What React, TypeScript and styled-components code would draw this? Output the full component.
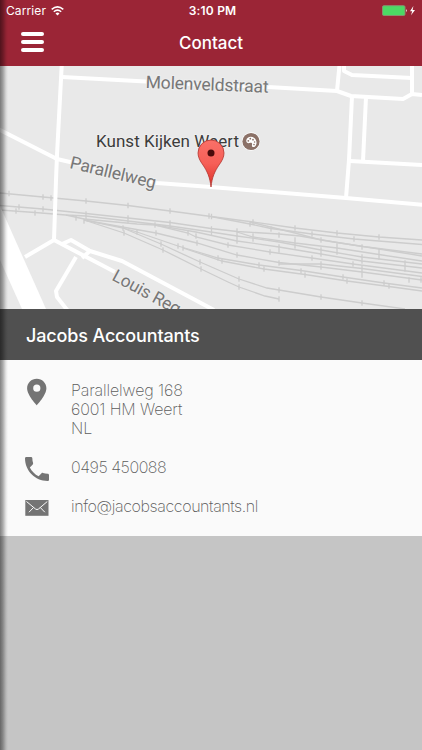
import React from "react"
import styled, { createGlobalStyle } from "styled-components"

const rails = [
  "M0 193 L43 197 L86 201 L128 205.5 L170 211 L211 216.5 L253 222 L295 228 L337 233 L379 237 L422 240",
  "M211 216.5 L250 224 L271 228.5 L312 234 L354 239 L422 244.5",
  "M250 222 L295 233 L321 240 L363 246.5 L422 254",
  "M0 205.5 L43 209 L86 213.5 L128 218 L170 222.5 L211 228.5 L237 231.5 L279 234 L300 236 L337 242.5 L379 249 L422 256",
  "M0 210 L35 212.5 L66 215 L86 216 L128 221 L170 226 L211 232 L237 236 L279 242 L321 250 L362 257 L422 264",
  "M237 232 L253 237 L295 243 L337 248 L379 254.5 L422 261",
  "M155 225 L196 232 L237 241 L279 247 L321 254 L362 261 L422 268",
  "M66 215 L84 219 L137 224 L155 225 L188 233 L196 237 L228 245 L270 252 L312 258 L353 264 L422 273",
  "M84 220 L128 228 L156 233 L197 243 L237 255 L279 262.5 L321 267 L362 272 L422 280",
  "M279 264 L321 264 L362 268.5 L422 276.5",
  "M123 228 L137 232 L178 246 L218 258 L259 265 L301 270.5 L343 277 L384 283 L422 288",
  "M183 248 L222 261 L264 269 L305 274.5 L347 281 L389 286.5 L422 291",
  "M84 220 L123 228 L161 244 L200 262 L239 279 L267 288 L279 290 L321 297 L362 303 L405 309",
  "M84 220 L124 233 L163 250 L201 269 L228 282 L239 287 L265 296 L279 299",
]

const ticks = [
  [9, 193.5], [43, 197], [51, 198], [86, 201], [128, 205.5], [170, 211],
  [209, 216], [211.5, 216.5], [253, 222], [295, 228], [337, 233], [379, 237],
  [19, 207], [43, 209], [16, 211], [35, 213], [86, 214], [86, 217],
  [128, 218], [128, 221], [170, 223], [170, 226], [76, 218], [84, 221],
  [123, 228], [124, 233], [155, 225], [156, 233], [137, 232], [161, 244],
  [163, 250], [178, 246], [183, 248], [188, 233], [196, 236], [197, 243],
  [200, 262], [201, 269], [211.5, 229], [211.5, 233], [218, 258], [222, 261],
  [237, 231], [237, 236], [237, 241], [237, 255], [228, 245], [239, 279],
  [239, 287], [250, 224], [253, 236], [253, 239], [271, 229], [270, 252],
  [259, 265], [264, 269], [279, 235], [279, 247], [279, 250], [279, 263],
  [279, 290], [279, 299], [295, 240], [295, 243], [295, 246], [312, 234],
  [312, 258], [301, 271], [305, 275], [321, 240], [321, 250], [321, 254],
  [321, 264], [321, 267], [321, 297], [337, 246], [337, 249], [337, 252],
  [354, 239], [353, 264], [343, 277], [347, 281], [362, 247], [362, 257],
  [362, 261], [362, 268], [362, 272], [362, 275], [362, 303], [379, 251],
  [379, 254], [379, 257], [384, 283], [389, 286], [405, 263], [405, 266],
  [405, 269], [409, 280], [421, 280],
]

const roads = [
  "M62 60 L57 155 L56 180 L54 240",
  "M62 77 L211 85 L268 87 L337 91 L351 96 L403 99 L412 94 L422 95",
  "M340 60 L337 91",
  "M344 60 L344 71 L352 75 L412 78",
  "M412 60 V94",
  "M352 96 L349 160 L346 198",
  "M366 97 L363 161",
  "M350 161 L422 165",
  "M-2 129 L57 159 L100 169 L157 183 L211 187 L346 198 L426 205",
  "M25 257 L54 240 L115 272",
  "M62 244 L71 240 L90 251 L122 261 L214 310",
  "M91 250 L82 258",
  "M76 257 L56 291 L57 297 L68 311",
]

const Map: React.FC = () => (
  <MapImage viewBox="0 66 422 243" aria-label="Map of Parallelweg, Weert">
    <defs>
      <linearGradient id="pinFill" x1="0" y1="0" x2="0" y2="1">
        <stop offset="0" stopColor="#fa7068" />
        <stop offset="0.5" stopColor="#f65f57" />
        <stop offset="1" stopColor="#dc2f27" />
      </linearGradient>
    </defs>
    <g fill="none" stroke="#cdcdcd" strokeWidth="1.3">
      {rails.map(d => (
        <path key={d} d={d} />
      ))}
      <path d={ticks.map(([x, y]) => `M${x} ${y - 2.8}v5.6`).join(" ")} />
    </g>
    <path d="M0 206 L5 217 L46 309 H22 L0 260Z" fill="#fff" />
    <g fill="none" stroke="#fff" strokeWidth="4" strokeLinejoin="round">
      {roads.map(d => (
        <path key={d} d={d} />
      ))}
    </g>
    <Street transform="translate(145.5 88) rotate(2.2)" textLength="123">
      Molenveldstraat
    </Street>
    <Street transform="translate(69 168) rotate(13.5)" textLength="88">
      Parallelweg
    </Street>
    <Street transform="translate(111 279.5) rotate(28.5)" textLength="75">
      Louis Reg
    </Street>
    <Place x="96" y="147" textLength="143">
      Kunst Kijken Weert
    </Place>
    <circle cx="251" cy="141.5" r="9.2" fill="#fff" />
    <circle cx="251" cy="141.5" r="8.6" fill="#8b7167" />
    <path
      d="M246.3 140.3c.5-3.7 5.2-4.5 8-2.3 2.8 2.3 2.9 6.7.7 8.5-2 1.4-3.5 0-3-1.7.6-1.7-.6-2.2-2.3-1.8-2.1.5-3.7-.5-3.4-2.7Z"
      fill="#fff"
    />
    <g fill="#8b7167">
      <circle cx="248.3" cy="140.8" r=".9" />
      <circle cx="250.3" cy="138.7" r=".9" />
      <circle cx="253" cy="139.7" r=".9" />
      <circle cx="254.6" cy="142" r=".8" />
      <circle cx="254" cy="144.6" r=".8" />
    </g>
    <path
      d="M211 187 C210 177 207 171 203 165 C200 161 198 157 198 153 A13 13 0 0 1 224 153 C224 157 222 161 219 165 C215 171 212 177 211 187Z"
      fill="url(#pinFill)"
      stroke="#b3342d"
      strokeWidth="0.8"
    />
    <circle cx="211" cy="153" r="3.5" fill="#4a0b0b" />
  </MapImage>
)

const App: React.FC = () => (
  <Screen>
    <GlobalStyle />
    <Header>
      <StatusBar>
        <Carrier>
          Carrier
          <svg width="13" height="10" viewBox="0 0 13 10">
            <g fill="none" stroke="#fff" strokeWidth="1.5">
              <path d="M.7 3.4Q6.5-1.7 12.3 3.4" />
              <path d="M2.8 5.7Q6.5 2.5 10.2 5.7" />
            </g>
            <path d="M4.5 7.4Q6.5 5.8 8.5 7.4L6.5 9.5Z" fill="#fff" />
          </svg>
        </Carrier>
        <Time>3:10 PM</Time>
        <Battery>
          <svg width="35" height="12" viewBox="0 0 35 12">
            <rect x=".5" y=".7" width="22.5" height="9.8" rx="1.3" fill="#4cd964" stroke="#87906f" />
            <path d="M24 4q1.7 1.6 0 3.2Z" fill="#fff" />
            <path d="M31.4 1 28 6.2h2.2L29 10.3l4-5.4h-2.4Z" fill="#fff" />
          </svg>
        </Battery>
      </StatusBar>
      <NavBar>
        <MenuButton aria-label="Menu">
          <MenuLine />
          <MenuLine />
          <MenuLine />
        </MenuButton>
        <Title>Contact</Title>
      </NavBar>
    </Header>
    <Map />
    <CompanyBar>
      <Company>Jacobs Accountants</Company>
    </CompanyBar>
    <Details>
      <DetailRow $height={77}>
        <svg width="24" height="28" viewBox="0 0 24 28">
          <path
            d="M11.8 0C6.4 0 2.1 4.2 2.1 9.5 2.1 16.5 11.8 26.5 11.8 26.5s9.6-10 9.6-17C21.4 4.2 17.1 0 11.8 0Zm0 13a3.6 3.6 0 1 1 0-7.2 3.6 3.6 0 0 1 0 7.2Z"
            transform="translate(0 .8)"
            fill="#747474"
          />
        </svg>
        <DetailText $spacing={-0.12}>
          Parallelweg 168
          <br />
          6001 HM Weert
          <br />
          NL
        </DetailText>
      </DetailRow>
      <DetailRow $height={39}>
        <PhoneIcon width="24" height="24" viewBox="3 3 18 18">
          <path
            d="M6.62 10.79c1.44 2.83 3.76 5.14 6.59 6.59l2.2-2.2c.27-.27.67-.36 1.02-.24 1.12.37 2.33.57 3.57.57.55 0 1 .45 1 1V20c0 .55-.45 1-1 1-9.39 0-17-7.61-17-17 0-.55.45-1 1-1h3.5c.55 0 1 .45 1 1 0 1.25.2 2.45.57 3.57.11.35.03.74-.25 1.02l-2.2 2.2Z"
            fill="#747474"
          />
        </PhoneIcon>
        <DetailText $spacing={-0.45}>0495 450088</DetailText>
      </DetailRow>
      <DetailRow $height={39}>
        <MailIcon width="24" height="16" viewBox="0 0 24 16">
          <rect x=".3" width="23.2" height="15.8" fill="#747474" />
          <path
            d="M1.5 1.5 10.5 9Q12 10.2 13.5 9L22.3 1.5M4 12.2 8.5 7.5M19.8 12.2 15.3 7.5"
            fill="none"
            stroke="#fafafa"
            strokeWidth="1"
          />
        </MailIcon>
        <DetailText $spacing={-0.4}>info@jacobsaccountants.nl</DetailText>
      </DetailRow>
    </Details>
    <EdgeShadow />
  </Screen>
)

export default App

const GlobalStyle = createGlobalStyle`
  * {
    box-sizing: border-box;
  }
  body {
    margin: 0;
    background: #c5c5c5;
    font-family: "Liberation Sans", Arial, sans-serif;
  }
`

const Screen = styled.div`
  position: relative;
  width: 422px;
  height: 750px;
  overflow: hidden;
  background: #c5c5c5;
`

const Header = styled.header`
  height: 66px;
  background: #9b2536;
  color: white;
`

const StatusBar = styled.div`
  display: grid;
  grid-template-columns: 1fr auto 1fr;
  align-items: center;
  height: 21px;
  padding: 0 5px 0 6px;
  font-family: Inter, sans-serif;
  font-size: 12px;
`
const Carrier = styled.span`
  display: flex;
  align-items: center;
  gap: 5px;
  letter-spacing: 0.1px;
`
const Time = styled.span`
  padding-left: 2px;
  font-weight: 600;
  letter-spacing: 0.2px;
`
const Battery = styled.span`
  display: flex;
  justify-content: flex-end;
`

const NavBar = styled.nav`
  display: grid;
  grid-template-columns: 1fr auto 1fr;
  align-items: center;
  height: 42px;
  padding: 0 21px;
`
const MenuButton = styled.button`
  display: flex;
  flex-direction: column;
  gap: 4px;
  width: 23px;
  padding: 0;
  border: none;
  background: none;
`
const MenuLine = styled.span`
  height: 4px;
  border-radius: 2px;
  background: white;
`
const Title = styled.h1`
  margin: 0;
  padding-top: 2px;
  font-family: Inter, sans-serif;
  font-size: 17px;
  font-weight: 500;
`

const MapImage = styled.svg`
  display: block;
  width: 422px;
  height: 243px;
  background: #e9e9e9;
`
const Street = styled.text`
  fill: #777;
  stroke: #eee;
  stroke-width: 2px;
  paint-order: stroke;
  font-family: Roboto, sans-serif;
  font-size: 17.5px;
`
const Place = styled(Street)`
  fill: #3c3c3c;
  font-size: 17px;
`

const CompanyBar = styled.div`
  display: flex;
  align-items: center;
  height: 51px;
  padding: 1px 26px 0;
  background: #505050;
`
const Company = styled.h2`
  margin: 0;
  color: white;
  font-family: Inter, sans-serif;
  font-size: 18px;
  font-weight: 500;
  letter-spacing: -0.15px;
`

const Details = styled.section`
  height: 176px;
  padding: 18px 25px 0;
  background: #fafafa;
`
const DetailRow = styled.div<{ $height: number }>`
  display: grid;
  grid-template-columns: 24px 1fr;
  column-gap: 22px;
  align-items: start;
  height: ${props => props.$height}px;
`
const DetailText = styled.p<{ $spacing: number }>`
  margin: 3px 0 0;
  color: #5c5c5c;
  font-family: Inter, sans-serif;
  font-size: 16px;
  font-weight: 200;
  line-height: 19px;
  letter-spacing: ${props => props.$spacing}px;
  white-space: nowrap;
`
const PhoneIcon = styled.svg`
  margin-top: 2px;
`
const MailIcon = styled.svg`
  margin-top: 6px;
`

const EdgeShadow = styled.div`
  position: absolute;
  top: 0;
  bottom: 0;
  left: 0;
  width: 8px;
  background: linear-gradient(
    to right,
    rgba(0, 0, 0, 0.48),
    rgba(0, 0, 0, 0.32) 35%,
    rgba(0, 0, 0, 0.08) 75%,
    transparent
  );
`
